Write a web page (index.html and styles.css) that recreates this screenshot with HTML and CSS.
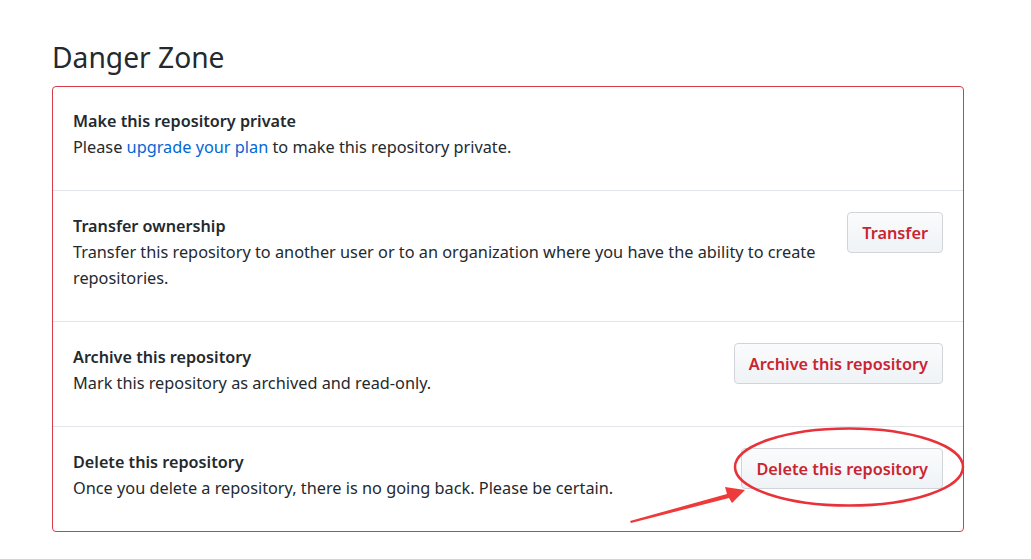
FILE: index.html
```html
<!DOCTYPE html>
<html>
<head>
<meta charset="utf-8">
<link rel="stylesheet" href="styles.css">
</head>
<body>
<div class="page">
  <h2 class="heading">Danger Zone</h2>
  <div class="zone">
    <div class="row">
      <div class="info">
        <div class="title">Make this repository private</div>
        <p class="desc">Please <a class="link" href="#">upgrade your plan</a> to make this repository private.</p>
      </div>
    </div>
    <div class="row">
      <div class="info">
        <div class="title">Transfer ownership</div>
        <p class="desc">Transfer this repository to another user or to an organization where you have the ability to create repositories.</p>
      </div>
      <button class="btn">Transfer</button>
    </div>
    <div class="row">
      <div class="info">
        <div class="title">Archive this repository</div>
        <p class="desc">Mark this repository as archived and read-only.</p>
      </div>
      <button class="btn">Archive this repository</button>
    </div>
    <div class="row">
      <div class="info">
        <div class="title">Delete this repository</div>
        <p class="desc">Once you delete a repository, there is no going back. Please be certain.</p>
      </div>
      <button class="btn">Delete this repository</button>
    </div>
  </div>
  <svg class="annot" width="1031" height="559" viewBox="0 0 1031 559">
    <ellipse cx="849" cy="467" rx="114" ry="38.5" fill="none" stroke="#e8323a" stroke-width="2.5"/>
    <polygon points="630,521 727,494 725,487 745,490 732,503 729,498 631,523" fill="#ee3a3a"/>
  </svg>
</div>
</body>
</html>
```

FILE: styles.css
```css
html, body {
  margin: 0;
  padding: 0;
  background: #ffffff;
}
.page {
  position: relative;
  width: 1031px;
  height: 559px;
  padding: 38px 0 0 52px;
  box-sizing: border-box;
  font-family: "Noto Sans", "Open Sans", sans-serif;
  color: #24292e;
}
.heading {
  margin: 0 0 10px;
  font-size: 28.2px;
  font-weight: 400;
  line-height: 38px;
  color: #24292e;
}
.zone {
  width: 912px;
  box-sizing: border-box;
  border: 1px solid #d73a49;
  border-radius: 4px;
}
.row {
  display: flex;
  align-items: flex-start;
  justify-content: space-between;
  gap: 16px;
  padding: 22px 20px 22px;
  border-top: 1px solid #e1e4e8;
}
.row:first-child {
  border-top: none;
  padding-top: 21px;
}
.info {
  flex: 1;
}
.title {
  font-size: 16.2px;
  font-weight: 600;
  line-height: 26px;
}
.desc {
  margin: 0 0 8px;
  font-size: 16.3px;
  line-height: 26px;
}
.link {
  color: #0366d6;
  text-decoration: none;
}
.btn {
  flex: none;
  height: 41px;
  margin-top: -1px;
  padding: 0 14px;
  font-family: inherit;
  font-size: 16.3px;
  font-weight: 600;
  color: #cb2431;
  background: linear-gradient(#fafbfc, #eff3f6);
  border: 1px solid #d1d5da;
  border-radius: 4px;
}
.annot {
  position: absolute;
  left: 0;
  top: 0;
  pointer-events: none;
}
```
